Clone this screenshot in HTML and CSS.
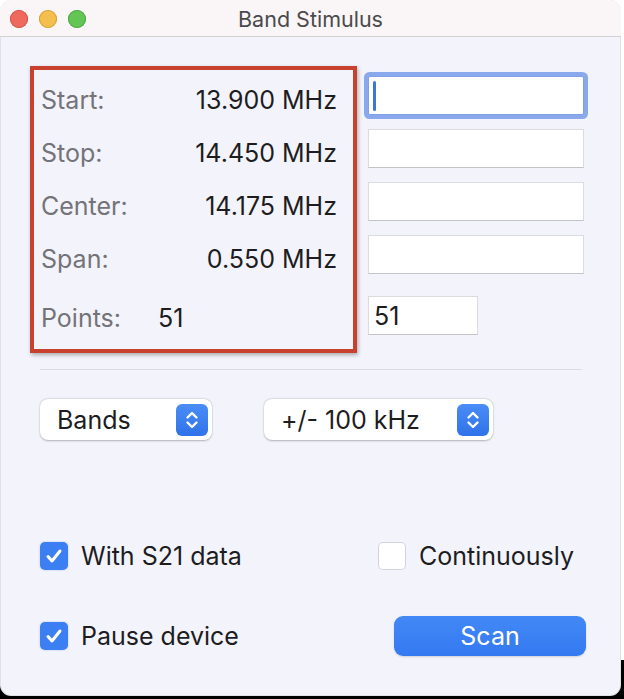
FILE: index.html
```html
<!DOCTYPE html>
<html>
<head>
<meta charset="utf-8">
<link rel="stylesheet" href="styles.css">
</head>
<body>
<div class="window">
  <div class="titlebar">
    <div class="lights">
      <span class="light red"></span>
      <span class="light yellow"></span>
      <span class="light green"></span>
    </div>
    <div class="title">Band Stimulus</div>
    <div></div>
  </div>
  <div class="content">
    <div class="top">
      <div class="readout">
        <div class="row"><span class="lbl">Start:</span><span class="val">13.900 MHz</span></div>
        <div class="row"><span class="lbl">Stop:</span><span class="val">14.450 MHz</span></div>
        <div class="row"><span class="lbl">Center:</span><span class="val">14.175 MHz</span></div>
        <div class="row"><span class="lbl">Span:</span><span class="val">0.550 MHz</span></div>
        <div class="row points"><span class="lbl pts">Points:</span><span class="val">51</span></div>
      </div>
      <div class="fields">
        <div class="field focused"><span class="caret"></span></div>
        <div class="field"></div>
        <div class="field"></div>
        <div class="field"></div>
        <div class="field small">51</div>
      </div>
    </div>
    <div class="sep"></div>
    <div class="popups">
      <div class="popup bands">
        <span>Bands</span>
        <span class="arrows"><svg width="32" height="32" viewBox="0 0 32 32"><path d="M11.5 13.5 L16 9 L20.5 13.5 M11.5 18.5 L16 23 L20.5 18.5" fill="none" stroke="#fff" stroke-width="2.4" stroke-linecap="round" stroke-linejoin="round"/></svg></span>
      </div>
      <div class="popup range">
        <span>+/- 100 kHz</span>
        <span class="arrows"><svg width="32" height="32" viewBox="0 0 32 32"><path d="M11.5 13.5 L16 9 L20.5 13.5 M11.5 18.5 L16 23 L20.5 18.5" fill="none" stroke="#fff" stroke-width="2.4" stroke-linecap="round" stroke-linejoin="round"/></svg></span>
      </div>
    </div>
    <div class="checks">
      <label class="check"><span class="box on"><svg width="28" height="28" viewBox="0 0 28 28"><path d="M8 14.5 L12 19 L20 9" fill="none" stroke="#fff" stroke-width="3" stroke-linecap="round" stroke-linejoin="round"/></svg></span>With S21 data</label>
      <label class="check"><span class="box"></span>Continuously</label>
      <label class="check"><span class="box on"><svg width="28" height="28" viewBox="0 0 28 28"><path d="M8 14.5 L12 19 L20 9" fill="none" stroke="#fff" stroke-width="3" stroke-linecap="round" stroke-linejoin="round"/></svg></span>Pause device</label>
      <button class="scan">Scan</button>
    </div>
  </div>
</div>
</body>
</html>
```
FILE: styles.css
```css
* { box-sizing: border-box; }
html, body { margin: 0; padding: 0; }
body {
  width: 624px;
  height: 699px;
  background: linear-gradient(to bottom, #ffffff 0 660px, #000000 660px);
  font-family: Inter, "Noto Sans", sans-serif;
  overflow: hidden;
}
.window {
  width: 621px;
  height: 696px;
  border-radius: 11px;
  overflow: hidden;
  background: #f3f3fb;
  display: flex;
  flex-direction: column;
  box-shadow: inset 0 0 0 1px rgba(0,0,0,0.08);
}
.titlebar {
  height: 37px;
  flex: none;
  background: #faf5f6;
  border-bottom: 1px solid #d6d2d4;
  display: grid;
  grid-template-columns: 1fr auto 1fr;
  align-items: center;
}
.lights {
  display: flex;
  gap: 11px;
  padding-left: 10px;
  padding-top: 1px;
}
.light {
  width: 18px;
  height: 18px;
  border-radius: 50%;
}
.red { background: #ee6a5f; box-shadow: inset 0 0 0 1px #d9544a; }
.yellow { background: #f5bf4f; box-shadow: inset 0 0 0 1px #d9a23a; }
.green { background: #62c554; box-shadow: inset 0 0 0 1px #4fa844; }
.title {
  font-size: 21.5px;
  color: #4a4a4c;
  padding-top: 1px;
}
.content {
  padding: 29px 30px 0 30px;
  display: flex;
  flex-direction: column;
}
.top {
  display: flex;
  align-items: flex-start;
  gap: 11px;
}
.readout {
  width: 327px;
  border: 4px solid #c8412e;
  box-shadow: 1px 2px 4px rgba(0,0,0,0.3);
  padding: 3px 16px 5px 7px;
  display: flex;
  flex-direction: column;
}
.row {
  height: 53px;
  display: flex;
  align-items: center;
  justify-content: space-between;
  font-size: 25px;
}
.row.points {
  margin-top: 6px;
  justify-content: flex-start;
}
.lbl { color: #737378; }
.lbl.pts { width: 117px; }
.val { color: #1d1d1f; }
.fields {
  margin-top: 10px;
  display: flex;
  flex-direction: column;
  gap: 14px;
}
.field {
  width: 216px;
  height: 39px;
  background: #fff;
  border: 1px solid #dcdce0;
  border-bottom-color: #c4c4c8;
  position: relative;
  font-size: 25px;
  color: #1d1d1f;
  display: flex;
  align-items: center;
  padding-left: 5px;
}
.field.focused {
  border-color: #7f9fe8;
  box-shadow: 0 0 0 4px #8aa8ec;
  border-radius: 2px;
}
.caret {
  width: 3px;
  height: 30px;
  border-radius: 2px;
  background: #3f74d9;
  margin-left: -1px;
}
.field.small {
  width: 110px;
  margin-top: 8px;
}
.sep {
  height: 1px;
  background: #dcdce3;
  margin: 16px 9px 0 10px;
}
.popups {
  margin: 29px 0 0 10px;
  display: flex;
  gap: 52px;
}
.popup {
  height: 41px;
  background: #fff;
  border-radius: 8px;
  box-shadow: 0 0.5px 2px rgba(0,0,0,0.25), 0 0 0 0.5px rgba(0,0,0,0.06);
  display: flex;
  align-items: center;
  justify-content: space-between;
  padding: 0 4px 0 17px;
  font-size: 25px;
  color: #1d1d1f;
}
.popup.bands { width: 172px; }
.popup.range { width: 229px; }
.arrows {
  width: 32px;
  height: 32px;
  border-radius: 6px;
  background: linear-gradient(#4a8df6, #2f72ea);
  display: flex;
}
.checks {
  margin: 96px 0 0 10px;
  display: grid;
  grid-template-columns: 338px 208px;
  grid-auto-rows: 40px;
  row-gap: 40px;
  align-items: center;
}
.check {
  display: flex;
  align-items: center;
  gap: 13px;
  font-size: 25px;
  color: #1d1d1f;
  white-space: nowrap;
}
.box {
  flex: none;
  width: 28px;
  height: 28px;
  border-radius: 5px;
  background: #fff;
  box-shadow: inset 0 0 0 1px #d4d4d8;
  display: flex;
}
.box.on {
  background: #3b7ff2;
  box-shadow: 0 0 2px rgba(59,127,242,0.4);
}
.scan {
  width: 192px;
  height: 40px;
  margin-left: 16px;
  border: none;
  border-radius: 9px;
  background: linear-gradient(#4289f6, #3479f0);
  box-shadow: 0 1px 2px rgba(0,0,0,0.15);
  color: #fff;
  font-family: Inter, "Noto Sans", sans-serif;
  font-size: 25px;
  padding: 0;
}
```
